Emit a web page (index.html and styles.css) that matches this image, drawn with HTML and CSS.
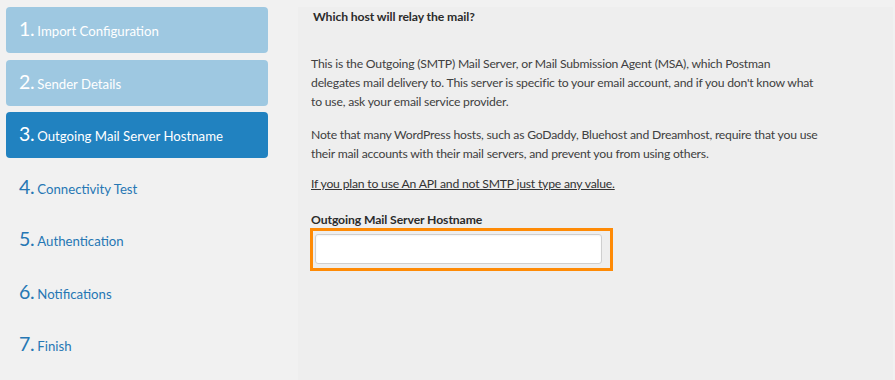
FILE: index.html
```html
<!DOCTYPE html>
<html>
<head>
<meta charset="utf-8">
<link rel="stylesheet" href="styles.css">
</head>
<body>
<div class="wizard">
  <nav class="steps">
    <div class="step done"><span class="num">1.</span><span class="label">Import Configuration</span></div>
    <div class="step done"><span class="num">2.</span><span class="label">Sender Details</span></div>
    <div class="step current"><span class="num">3.</span><span class="label">Outgoing Mail Server Hostname</span></div>
    <div class="step"><span class="num">4.</span><span class="label">Connectivity Test</span></div>
    <div class="step"><span class="num">5.</span><span class="label">Authentication</span></div>
    <div class="step"><span class="num">6.</span><span class="label">Notifications</span></div>
    <div class="step"><span class="num">7.</span><span class="label">Finish</span></div>
  </nav>
  <section class="panel">
    <h2 class="title">Which host will relay the mail?</h2>
    <p class="text p1">This is the Outgoing (SMTP) Mail Server, or Mail Submission Agent (MSA), which Postman<br>delegates mail delivery to. This server is specific to your email account, and if you don't know what<br>to use, ask your email service provider.</p>
    <p class="text p2">Note that many WordPress hosts, such as GoDaddy, Bluehost and Dreamhost, require that you use<br>their mail accounts with their mail servers, and prevent you from using others.</p>
    <p class="text note">If you plan to use An API and not SMTP just type any value.</p>
    <label class="field-label" for="host">Outgoing Mail Server Hostname</label>
    <div class="highlight"><input id="host" class="input" type="text"></div>
  </section>
</div>
</body>
</html>
```
FILE: styles.css
```css
html, body {
  margin: 0;
  padding: 0;
  background: #f1f1f1;
  font-family: Lato, "Open Sans", sans-serif;
  height: 100%;
}

.wizard {
  display: flex;
  align-items: stretch;
  height: 380px;
}

.steps {
  width: 262px;
  padding: 7px 0 0 6px;
  margin-right: 30px;
  display: flex;
  flex-direction: column;
  gap: 6.5px;
}

.step {
  height: 46px;
  border-radius: 4px;
  display: flex;
  align-items: baseline;
  padding: 0 0 0 13px;
  box-sizing: border-box;
  color: #2677b4;
  line-height: 44px;
}

.step.done {
  background: #9ec8e1;
  color: #fff;
}

.step.current {
  background: #2182c0;
  color: #fff;
}

.num {
  font-size: 19.5px;
  font-weight: 400;
  margin-right: 3px;
  letter-spacing: -0.3px;
}

.label {
  font-size: 13.2px;
}

.panel {
  flex: 0 0 595px;
  margin-top: 7px;
  background: #eeeeee;
  padding: 0 0 0 13px;
  box-sizing: border-box;
  color: #404040;
}

.title {
  margin: 0 0 27.5px 2px;
  font-size: 12.2px;
  font-weight: 700;
  line-height: 19px;
  color: #2b2b2b;
  letter-spacing: -0.1px;
}

.text {
  margin: 0;
  font-size: 12.2px;
  line-height: 19px;
  letter-spacing: -0.2px;
  width: 560px;
}

.p1 { margin-bottom: 14px; }
.p2 { margin-bottom: 11px; }

.note {
  text-decoration: underline;
  color: #333;
  margin-bottom: 17px;
}

.field-label {
  display: block;
  font-size: 12.2px;
  font-weight: 700;
  line-height: 19px;
  color: #2b2b2b;
  letter-spacing: -0.1px;
}

.highlight {
  width: 292px;
  margin-left: -1px;
  margin-top: -1px;
  border: 3px solid #fe8a05;
  padding: 3px 3px 4px 2px;
}

.input {
  display: block;
  width: 287px;
  height: 30px;
  box-sizing: border-box;
  margin: 0;
  border: 1px solid #cfcfcf;
  border-radius: 3px;
  background: #fff;
  box-shadow: inset 0 1px 2px rgba(0,0,0,0.05);
  outline: none;
}
```
